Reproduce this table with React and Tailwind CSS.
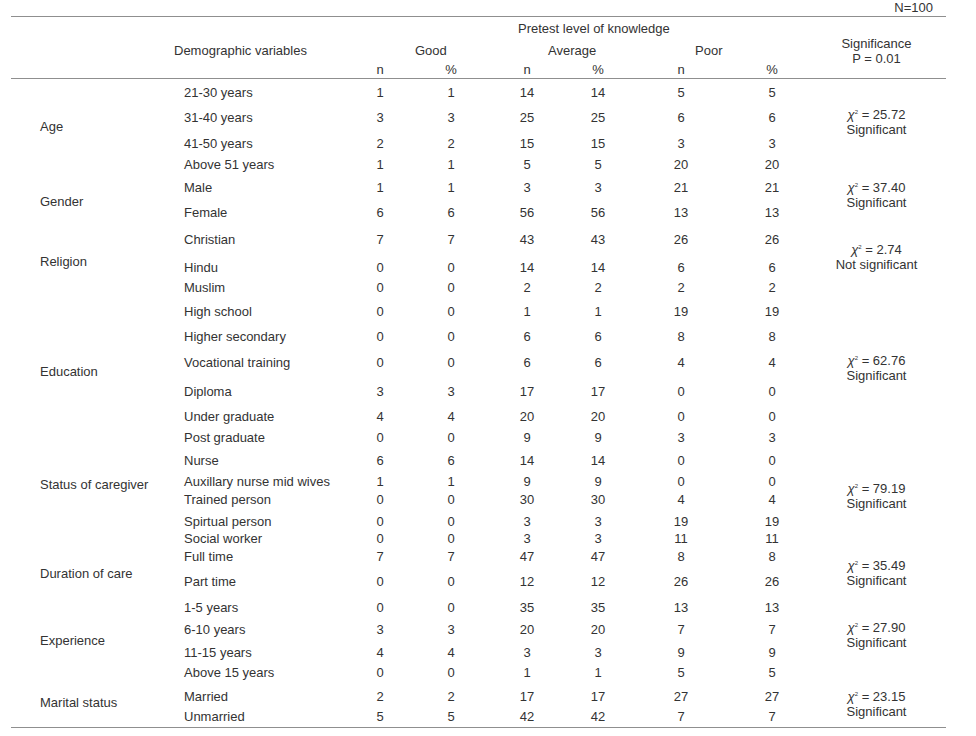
import React from 'react'

// Rows: [label, goodN, good%, avgN, avg%, poorN, poor%, heightClass]
const GROUPS = [
  {
    label: 'Age', pt: 'pt-[34px]', sigPt: 'pt-[22px]', chi: '25.72', sig: 'Significant',
    rows: [
      ['21-30 years', 1, 1, 14, 14, 5, 5, 'h-[25px]'],
      ['31-40 years', 3, 3, 25, 25, 6, 6, 'h-[26px]'],
      ['41-50 years', 2, 2, 15, 15, 3, 3, 'h-[21px]'],
      ['Above 51 years', 1, 1, 5, 5, 20, 20, 'h-[23px]'],
    ],
  },
  {
    label: 'Gender', pt: 'pt-[14px]', sigPt: 'pt-0', chi: '37.40', sig: 'Significant',
    rows: [
      ['Male', 1, 1, 3, 3, 21, 21, 'h-[25px]'],
      ['Female', 6, 6, 56, 56, 13, 13, 'h-[27px]'],
    ],
  },
  {
    label: 'Religion', pt: 'pt-[22px]', sigPt: 'pt-[10px]', chi: '2.74', sig: 'Not significant',
    rows: [
      ['Christian', 7, 7, 43, 43, 26, 26, 'h-[28px]'],
      ['Hindu', 0, 0, 14, 14, 6, 6, 'h-[20px]'],
      ['Muslim', 0, 0, 2, 2, 2, 2, 'h-[24px]'],
    ],
  },
  {
    label: 'Education', pt: 'pt-[60px]', sigPt: 'pt-[49px]', chi: '62.76', sig: 'Significant',
    rows: [
      ['High school', 0, 0, 1, 1, 19, 19, 'h-[25px]'],
      ['Higher secondary', 0, 0, 6, 6, 8, 8, 'h-[26px]'],
      ['Vocational training', 0, 0, 6, 6, 4, 4, 'h-[29px]'],
      ['Diploma', 3, 3, 17, 17, 0, 0, 'h-[25px]'],
      ['Under graduate', 4, 4, 20, 20, 0, 0, 'h-[21px]'],
      ['Post graduate', 0, 0, 9, 9, 3, 3, 'h-[23px]'],
    ],
  },
  {
    label: 'Status of caregiver', pt: 'pt-[24px]', sigPt: 'pt-[28px]', chi: '79.19', sig: 'Significant',
    rows: [
      ['Nurse', 6, 6, 14, 14, 0, 0, 'h-[21px]'],
      ['Auxillary nurse mid wives', 1, 1, 9, 9, 0, 0, 'h-[18px]'],
      ['Trained person', 0, 0, 30, 30, 4, 4, 'h-[22px]'],
      ['Spirtual person', 0, 0, 3, 3, 19, 19, 'h-[17px]'],
      ['Social worker', 0, 0, 3, 3, 11, 11, 'h-[18px]'],
    ],
  },
  {
    label: 'Duration of care', pt: 'pt-[17px]', sigPt: 'pt-[9px]', chi: '35.49', sig: 'Significant',
    rows: [
      ['Full time', 7, 7, 47, 47, 8, 8, 'h-[25px]'],
      ['Part time', 0, 0, 12, 12, 26, 26, 'h-[26px]'],
    ],
  },
  {
    label: 'Experience', pt: 'pt-[33px]', sigPt: 'pt-[20px]', chi: '27.90', sig: 'Significant',
    rows: [
      ['1-5 years', 0, 0, 35, 35, 13, 13, 'h-[22px]'],
      ['6-10 years', 3, 3, 20, 20, 7, 7, 'h-[23px]'],
      ['11-15 years', 4, 4, 3, 3, 9, 9, 'h-[20px]'],
      ['Above 15 years', 0, 0, 1, 1, 5, 5, 'h-[24px]'],
    ],
  },
  {
    label: 'Marital status', pt: 'pt-[6px]', sigPt: 'pt-0', chi: '23.15', sig: 'Significant',
    rows: [
      ['Married', 2, 2, 17, 17, 27, 27, 'h-[20px]'],
      ['Unmarried', 5, 5, 42, 42, 7, 7, 'h-[18px]'],
    ],
  },
]

const Chi = ({ value }) => (
  <span>
    <span className="italic">χ</span>
    <span className="relative -top-[5px] text-[6px] leading-none">2</span> = {value}
  </span>
)

const Group = ({ group }) => (
  <div className="flex">
    <div className={`w-[173px] shrink-0 pl-[29px] whitespace-nowrap ${group.pt}`}>{group.label}</div>
    <div className="w-[627px] shrink-0 flex flex-col">
      {group.rows.map((r) => (
        <div
          key={r[0]}
          className={`grid grid-cols-[161px_70px_72px_80px_62px_104px_78px] ${r[7]}`}
        >
          <div className="whitespace-nowrap">{r[0]}</div>
          {r.slice(1, 7).map((v, i) => (
            <div key={i} className="text-center">{v}</div>
          ))}
        </div>
      ))}
    </div>
    <div className={`w-[131px] shrink-0 text-center leading-[15px] ${group.sigPt}`}>
      <div className="h-[15px]"><Chi value={group.chi} /></div>
      <div className="h-[15px]">{group.sig}</div>
    </div>
  </div>
)

export default function App() {
  return (
    <div className="w-[976px] h-[736px] bg-white text-[#333] text-[13px] leading-4 font-['Liberation_Sans',Arial,sans-serif]">
      <div className="h-4 flex justify-end pr-[43px]">N=100</div>

      <div className="ml-[11px] w-[935px] border-t border-[#8f8f8f]">
        {/* Header */}
        <div className="grid grid-cols-[173px_161px_70px_72px_80px_62px_104px_78px_131px] grid-rows-[24px_20px_17px] whitespace-nowrap">
          <div className="col-start-3 col-span-6 row-start-1 pl-[173px] pt-[4px]">Pretest level of knowledge</div>
          <div className="col-start-9 row-start-1 row-span-3 text-center pt-[19px] leading-[15px]">
            <div>Significance</div>
            <div>P = 0.01</div>
          </div>
          <div className="col-start-1 col-span-2 row-start-2 pl-[163px] pt-[2px]">Demographic variables</div>
          <div className="col-start-3 col-span-2 row-start-2 pl-[70px] pt-[2px]">Good</div>
          <div className="col-start-5 col-span-2 row-start-2 pl-[61px] pt-[2px]">Average</div>
          <div className="col-start-7 col-span-2 row-start-2 pl-[66px] pt-[2px]">Poor</div>
          <div className="col-start-3 row-start-3 text-center pt-[1px]">n</div>
          <div className="col-start-4 row-start-3 text-center pt-[1px]">%</div>
          <div className="col-start-5 row-start-3 text-center pt-[1px]">n</div>
          <div className="col-start-6 row-start-3 text-center pt-[1px]">%</div>
          <div className="col-start-7 row-start-3 text-center pt-[1px]">n</div>
          <div className="col-start-8 row-start-3 text-center pt-[1px]">%</div>
        </div>

        {/* Body */}
        <div className="border-t border-b border-[#8f8f8f] pt-[6px]">
          {GROUPS.map((g) => (
            <Group key={g.label} group={g} />
          ))}
        </div>
      </div>
    </div>
  )
}
